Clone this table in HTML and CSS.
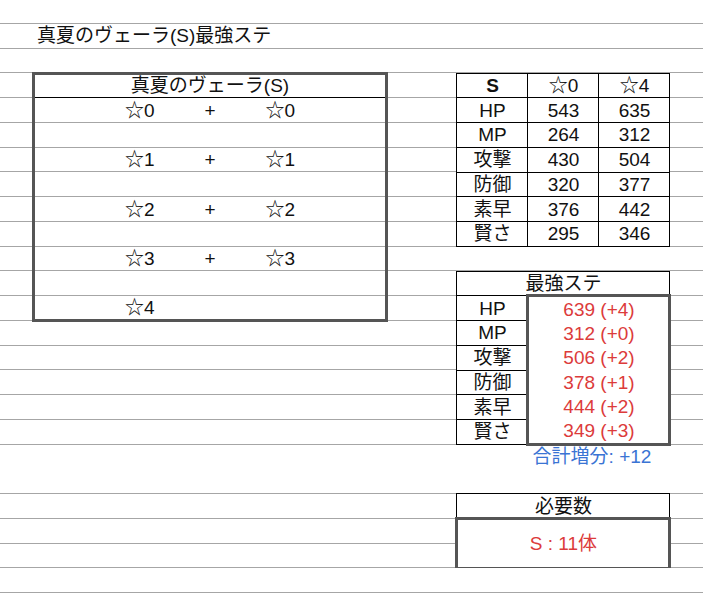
FILE: index.html
```html
<!DOCTYPE html>
<html lang="ja">
<head>
<meta charset="utf-8">
<title>真夏のヴェーラ(S)最強ステ</title>
<link rel="stylesheet" href="styles.css">
</head>
<body>
<div class="sheet">
  <div class="title">真夏のヴェーラ(S)最強ステ</div>

  <div class="stars">
    <div class="stars-head">真夏のヴェーラ(S)</div>
    <div class="star-row"><span class="c2">☆0</span><span class="c3">+</span><span class="c4">☆0</span></div>
    <div class="star-row"></div>
    <div class="star-row"><span class="c2">☆1</span><span class="c3">+</span><span class="c4">☆1</span></div>
    <div class="star-row"></div>
    <div class="star-row"><span class="c2">☆2</span><span class="c3">+</span><span class="c4">☆2</span></div>
    <div class="star-row"></div>
    <div class="star-row"><span class="c2">☆3</span><span class="c3">+</span><span class="c4">☆3</span></div>
    <div class="star-row"></div>
    <div class="star-row"><span class="c2">☆4</span></div>
  </div>

  <div class="stats">
    <div class="cell bold">S</div><div class="cell">☆0</div><div class="cell">☆4</div>
    <div class="cell">HP</div><div class="cell">543</div><div class="cell">635</div>
    <div class="cell">MP</div><div class="cell">264</div><div class="cell">312</div>
    <div class="cell">攻撃</div><div class="cell">430</div><div class="cell">504</div>
    <div class="cell">防御</div><div class="cell">320</div><div class="cell">377</div>
    <div class="cell">素早</div><div class="cell">376</div><div class="cell">442</div>
    <div class="cell">賢さ</div><div class="cell">295</div><div class="cell">346</div>
  </div>

  <div class="best">
    <div class="cell head">最強ステ</div>
    <div class="best-values">
      <div class="val">639 (+4)</div>
      <div class="val">312 (+0)</div>
      <div class="val">506 (+2)</div>
      <div class="val">378 (+1)</div>
      <div class="val">444 (+2)</div>
      <div class="val">349 (+3)</div>
    </div>
    <div class="cell lab">HP</div>
    <div class="cell lab">MP</div>
    <div class="cell lab">攻撃</div>
    <div class="cell lab">防御</div>
    <div class="cell lab">素早</div>
    <div class="cell lab">賢さ</div>
  </div>

  <div class="total">合計増分: +12</div>

  <div class="cell need-head">必要数</div>
  <div class="need">S : 11体</div>
</div>
</body>
</html>
```

FILE: styles.css
```css
html {
  background-color: #fff;
  background-image: repeating-linear-gradient(to bottom,
    transparent 0, transparent 23px,
    #a6a6a6 23px, #a6a6a6 24px,
    transparent 24px, transparent 24.75px);
  min-height: 100%;
}

body {
  margin: 0;
  font-family: "Liberation Sans", "Noto Sans CJK JP", sans-serif;
  font-size: 19px;
  line-height: 1;
  color: #111;
}

.sheet {
  display: grid;
  grid-template-columns: 33px repeat(5, 70.8px) 70px repeat(3, 71px) 1fr;
  grid-auto-rows: 24.75px;
  padding-top: 23.5px;
}

.title {
  grid-column: 2 / -1;
  grid-row: 1;
  padding-left: 4px;
  display: flex;
  align-items: center;
}

/* left table */
.stars {
  grid-column: 2 / 7;
  grid-row: 3 / 13;
  margin: -1.5px;
  border: 3px solid #555;
  display: grid;
  grid-template-rows: 1fr repeat(8, 24.75px) 1fr;
}

.stars-head {
  border-bottom: 1px solid #000;
  margin-bottom: -0.5px;
  display: flex;
  align-items: center;
  justify-content: center;
}

.star-row {
  display: grid;
  grid-template-columns: repeat(5, 1fr);
  align-items: center;
  justify-items: center;
}

.c2 { grid-column: 2; }
.c3 { grid-column: 3; }
.c4 { grid-column: 4; }

/* generic cells */
.cell {
  border: 1px solid #000;
  margin: -0.5px;
  background: #fff;
  display: flex;
  align-items: center;
  justify-content: center;
}

.bold { font-weight: bold; }

/* stats table */
.stats {
  grid-column: 8 / 11;
  grid-row: 3 / 10;
  display: grid;
  grid-template-columns: repeat(3, 1fr);
  grid-template-rows: repeat(7, 1fr);
}

/* best table */
.best {
  grid-column: 8 / 11;
  grid-row: 11 / 18;
  display: grid;
  grid-template-columns: 1fr 2fr;
  grid-template-rows: repeat(7, 1fr);
}

.best .head {
  grid-column: 1 / -1;
  grid-row: 1;
}

.best .lab { grid-column: 1; }

.best-values {
  grid-column: 2;
  grid-row: 2 / 8;
  margin: -1.5px;
  border: 3px solid #555;
  background: #fff;
  z-index: 1;
  display: grid;
  grid-template-rows: repeat(6, 1fr);
  color: #dc3b3b;
}

.val {
  display: flex;
  align-items: center;
  justify-content: center;
}

.total {
  grid-column: 9 / 11;
  grid-row: 18;
  display: flex;
  align-items: center;
  justify-content: center;
  padding-right: 14px;
  color: #3a74d4;
}

.need-head {
  grid-column: 8 / 11;
  grid-row: 20;
}

.need {
  grid-column: 8 / 11;
  grid-row: 21 / 23;
  margin: -1.5px;
  border: 3px solid #555;
  background: #fff;
  display: flex;
  align-items: center;
  justify-content: center;
  color: #dc3b3b;
}
```
